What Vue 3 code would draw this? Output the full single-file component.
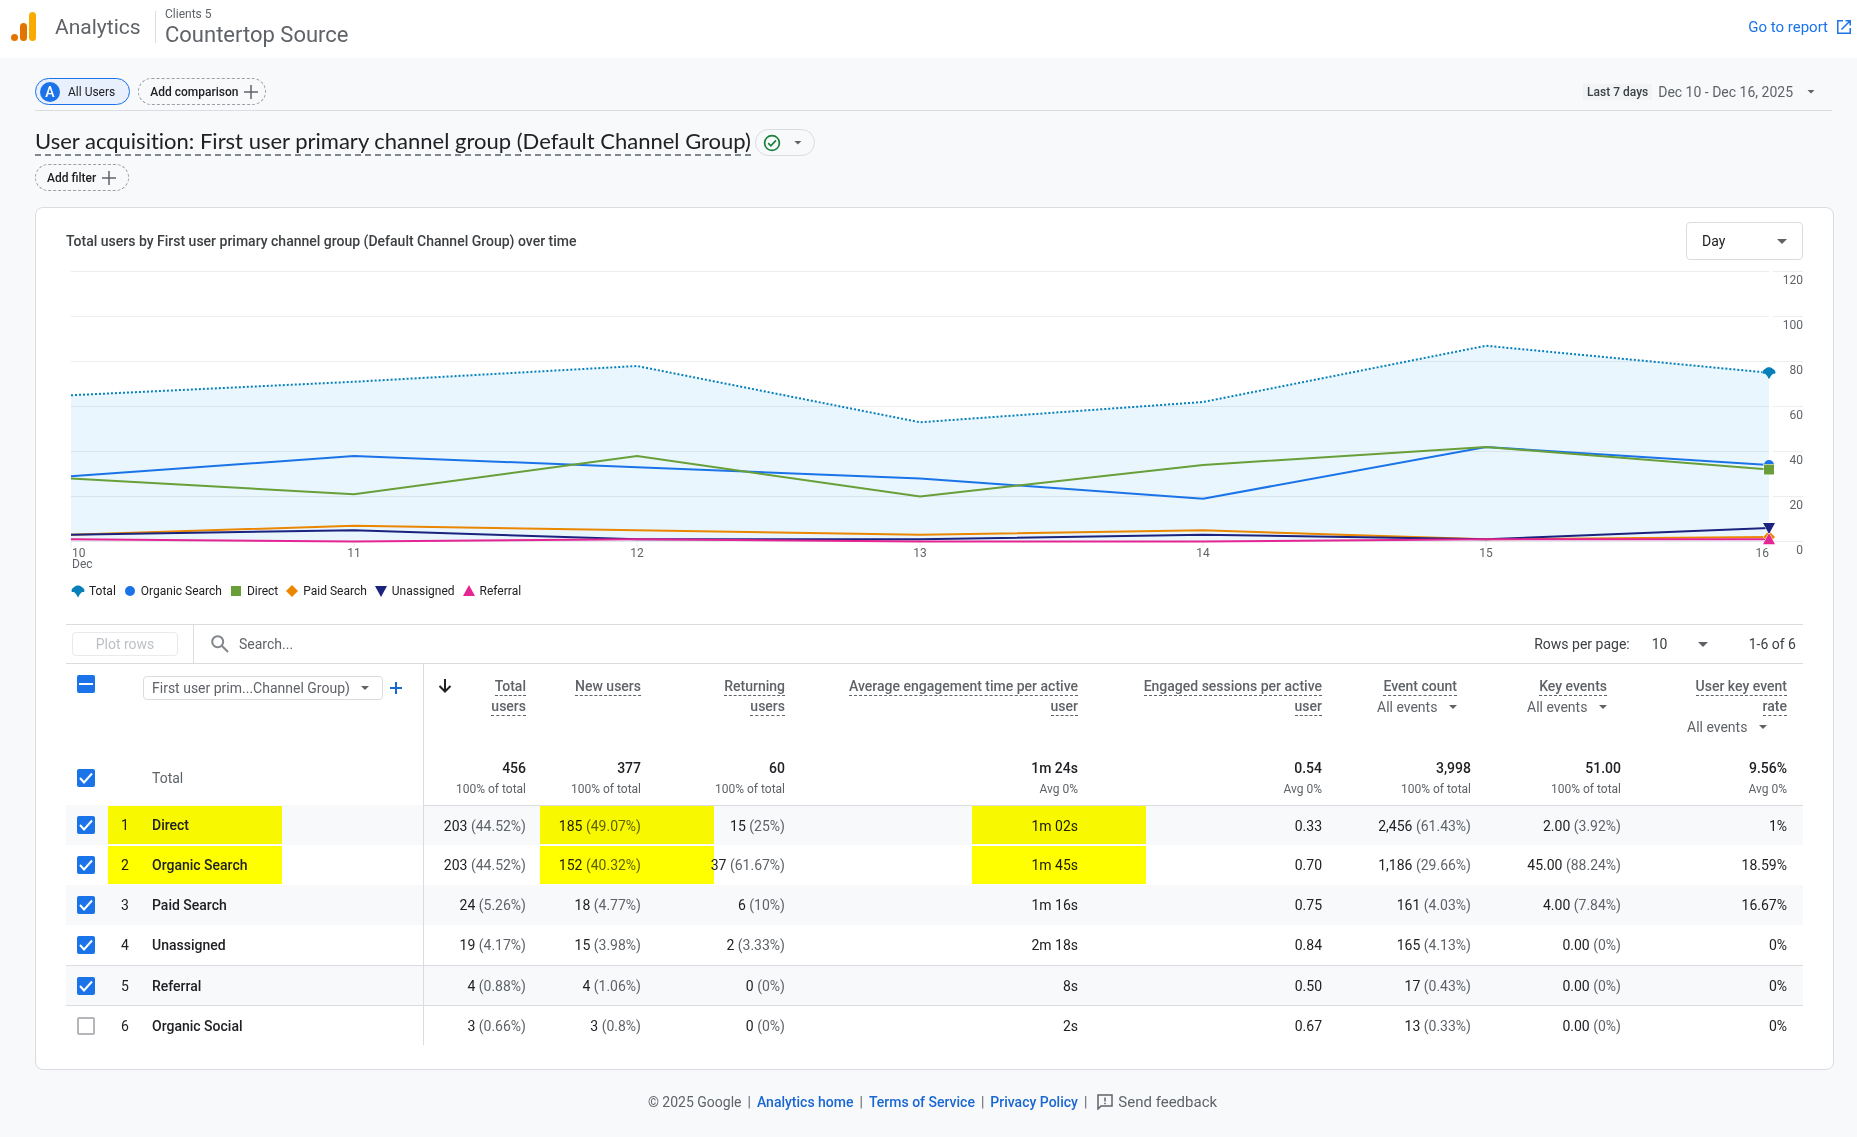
<script setup>
import { ref, computed, onMounted, onBeforeUnmount } from 'vue'

const days = ['10', '11', '12', '13', '14', '15', '16']
const series = [
  { name: 'Total', color: '#0580b8', values: [65, 71, 78, 53, 62, 87, 75], dotted: true, shape: 'M-6.5 0C-6.5 -2 -5 -3.5 -3.5 -4C-2.5 -6 2.5 -6 3.5 -4C5 -3.5 6.5 -2 6.5 0L6 1H4L2 3L0 6.5L-2 3L-4 1H-6Z' },
  { name: 'Organic Search', color: '#1a73e8', values: [29, 38, 33, 28, 19, 42, 34], shape: 'M-5 0A5 5 0 1 1 5 0A5 5 0 1 1 -5 0Z' },
  { name: 'Direct', color: '#689f38', values: [28, 21, 38, 20, 34, 42, 32], shape: 'M-5 -5H5V5H-5Z' },
  { name: 'Paid Search', color: '#ea8600', values: [3, 7, 5, 3, 5, 1, 2], shape: 'M0 -6L6 0L0 6L-6 0Z' },
  { name: 'Unassigned', color: '#1a237e', values: [3, 5, 1, 1, 3, 1, 6], shape: 'M-6 -5H6L0 6Z' },
  { name: 'Referral', color: '#e52592', values: [1, 0, 1, 0, 0, 1, 1], shape: 'M-6 5H6L0 -6Z' }
]

const chart = ref(null)
const chartWidth = ref(1737)
let observer
onMounted(() => {
  observer = new ResizeObserver(() => { chartWidth.value = chart.value.clientWidth })
  observer.observe(chart.value)
})
onBeforeUnmount(() => observer.disconnect())

const left = 5
const base = 279.5
const plotRight = computed(() => chartWidth.value - 34)
const x = (i) => left + ((plotRight.value - left) * i) / (days.length - 1)
const y = (v) => base - v * 2.25
const points = (s) => s.values.map((v, i) => `${x(i)},${y(v)}`).join(' ')
const area = computed(() => `${left},${base} ${points(series[0])} ${plotRight.value},${base}`)
const ticks = [0, 20, 40, 60, 80, 100, 120]

const columns = [
  { lines: ['Total', 'users'], total: '456', sub: '100% of total', sorted: true },
  { lines: ['New users'], total: '377', sub: '100% of total' },
  { lines: ['Returning', 'users'], total: '60', sub: '100% of total' },
  { lines: ['Average engagement time per active', 'user'], total: '1m 24s', sub: 'Avg 0%' },
  { lines: ['Engaged sessions per active', 'user'], total: '0.54', sub: 'Avg 0%' },
  { lines: ['Event count'], total: '3,998', sub: '100% of total', events: 'inset' },
  { lines: ['Key events'], total: '51.00', sub: '100% of total', events: 'inset' },
  { lines: ['User key event', 'rate'], total: '9.56%', sub: 'Avg 0%', events: 'flush' }
]
const markClass = { 1: 'mark-users', 3: 'mark-time' }

const rows = [
  { name: 'Direct', checked: true, marked: true, cells: [['203', '44.52%'], ['185', '49.07%'], ['15', '25%'], ['1m 02s'], ['0.33'], ['2,456', '61.43%'], ['2.00', '3.92%'], ['1%']] },
  { name: 'Organic Search', checked: true, marked: true, cells: [['203', '44.52%'], ['152', '40.32%'], ['37', '61.67%'], ['1m 45s'], ['0.70'], ['1,186', '29.66%'], ['45.00', '88.24%'], ['18.59%']] },
  { name: 'Paid Search', checked: true, cells: [['24', '5.26%'], ['18', '4.77%'], ['6', '10%'], ['1m 16s'], ['0.75'], ['161', '4.03%'], ['4.00', '7.84%'], ['16.67%']] },
  { name: 'Unassigned', checked: true, cells: [['19', '4.17%'], ['15', '3.98%'], ['2', '3.33%'], ['2m 18s'], ['0.84'], ['165', '4.13%'], ['0.00', '0%'], ['0%']] },
  { name: 'Referral', checked: true, ruled: true, cells: [['4', '0.88%'], ['4', '1.06%'], ['0', '0%'], ['8s'], ['0.50'], ['17', '0.43%'], ['0.00', '0%'], ['0%']] },
  { name: 'Organic Social', checked: false, ruled: true, cells: [['3', '0.66%'], ['3', '0.8%'], ['0', '0%'], ['2s'], ['0.67'], ['13', '0.33%'], ['0.00', '0%'], ['0%']] }
]
</script>

<template>
  <div class="page">
    <header class="topbar">
      <svg class="logo" width="26" height="30" viewBox="0 0 26 30" aria-hidden="true">
        <rect x="18" y="0" width="7" height="29" rx="3.5" fill="#f9ab00" />
        <rect x="9" y="11" width="7" height="18" rx="3.5" fill="#e37400" />
        <circle cx="3.5" cy="25.5" r="3.5" fill="#e37400" />
      </svg>
      <span class="product">Analytics</span>
      <div class="property">
        <span class="account">Clients 5</span>
        <span class="property-name">Countertop Source</span>
      </div>
      <a class="report-link" href="#report">
        Go to report
        <svg width="14" height="14" viewBox="0 0 14 14" fill="none" stroke="currentColor" stroke-width="1.5" aria-hidden="true">
          <path d="M6 .8H.8V13.2H13.2V8M8.5 .8H13.2V5.5M13.2 .8L4.5 9.5" />
        </svg>
      </a>
    </header>

    <main>
      <div class="comparisons">
        <button class="chip chip-active"><span class="badge">A</span>All Users</button>
        <button class="chip chip-dashed">Add comparison
          <svg width="14" height="14" viewBox="0 0 14 14" stroke="#5f6368" stroke-width="1.5" aria-hidden="true"><path d="M7 0V14M0 7H14" /></svg>
        </button>
        <button class="date-range"><span class="preset">Last 7 days</span>Dec 10 - Dec 16, 2025<span class="caret"></span></button>
      </div>

      <div class="title-row">
        <h1>User acquisition: First user primary channel group (Default Channel Group)</h1>
        <button class="status" aria-label="Data quality">
          <svg width="18" height="18" viewBox="0 0 18 18" fill="none" stroke="#188038" stroke-width="1.7" aria-hidden="true">
            <circle cx="9" cy="9" r="7.4" /><path d="M5.2 9.2L7.8 11.8L13 6.4" />
          </svg>
          <span class="caret"></span>
        </button>
      </div>
      <button class="chip chip-dashed chip-filter">Add filter
        <svg width="14" height="14" viewBox="0 0 14 14" stroke="#5f6368" stroke-width="1.5" aria-hidden="true"><path d="M7 0V14M0 7H14" /></svg>
      </button>

      <section class="card">
        <div class="card-head">
          <h2>Total users by First user primary channel group (Default Channel Group) over time</h2>
          <select class="interval" aria-label="Interval"><option>Day</option></select>
        </div>

        <div ref="chart" class="chart">
          <svg :width="chartWidth" height="310">
            <polygon :points="area" fill="#e9f6fe" />
            <g v-for="t in ticks" :key="t">
              <path :d="`M${left} ${y(t)}H${plotRight}M${plotRight + 4} ${y(t)}H${chartWidth}`" class="gridline" />
              <text :x="chartWidth" :y="y(t) + 12" text-anchor="end" class="axis">{{ t }}</text>
            </g>
            <g v-for="(d, i) in days" :key="d">
              <path :d="`M${x(i)} ${base}v6`" class="gridline" />
              <text :x="i === 0 ? left + 1 : x(i)" :y="base + 15" :text-anchor="i === 0 ? 'start' : i === 6 ? 'end' : 'middle'" class="axis">{{ d }}</text>
            </g>
            <text :x="left + 1" :y="base + 26" class="axis">Dec</text>
            <polyline v-for="s in series" :key="s.name" :points="points(s)" fill="none" :stroke="s.color" stroke-width="2" :stroke-dasharray="s.dotted ? '2 2' : null" />
            <path v-for="s in series" :key="s.name" :d="s.shape" :fill="s.color" stroke="#fff" stroke-width="1" paint-order="stroke" :transform="`translate(${plotRight} ${y(s.values[6])})`" />
          </svg>
        </div>

        <ul class="legend">
          <li v-for="s in series" :key="s.name">
            <svg width="12" height="12" viewBox="-6 -6 12 12" aria-hidden="true"><path :d="s.shape" :fill="s.color" /></svg>{{ s.name }}
          </li>
        </ul>

        <div class="toolbar">
          <div class="plot"><button disabled>Plot rows</button></div>
          <label class="search">
            <svg width="18" height="18" viewBox="0 0 18 18" fill="none" stroke="#80868b" stroke-width="2" aria-hidden="true"><circle cx="6.7" cy="6.7" r="5.5" /><path d="M10.8 10.8L17 17" /></svg>
            <input type="text" placeholder="Search..." aria-label="Search">
          </label>
          <label class="per-page">Rows per page:
            <select><option>10</option></select>
          </label>
          <span class="range">1-6 of 6</span>
        </div>

        <table>
          <colgroup>
            <col class="c-check"><col class="c-index"><col class="c-name">
            <col class="c-total"><col class="c-new"><col class="c-returning"><col class="c-time"><col class="c-sessions"><col class="c-count"><col class="c-key"><col class="c-rate">
          </colgroup>
          <thead>
            <tr class="head">
              <th class="check"><input type="checkbox" class="partial" aria-label="All rows"></th>
              <th></th>
              <th class="name">
                <div class="dimension">
                  <button class="dimension-pick">First user prim...Channel Group)<span class="caret"></span></button>
                  <button class="add" aria-label="Add dimension"><svg width="12" height="12" viewBox="0 0 12 12" stroke="#1967d2" stroke-width="2" aria-hidden="true"><path d="M6 0V12M0 6H12" /></svg></button>
                </div>
              </th>
              <th v-for="c in columns" :key="c.lines[0]" class="metric" :class="{ inset: c.events === 'inset' }">
                <div class="metric-head">
                  <svg v-if="c.sorted" class="sort" width="14" height="14" viewBox="0 0 14 14" fill="none" stroke="#202124" stroke-width="2" aria-label="Descending"><path d="M7 0V12.5M1.5 7L7 12.5L12.5 7" /></svg>
                  <span class="metric-name"><span class="term"><template v-for="(l, i) in c.lines" :key="l"><br v-if="i">{{ l }}</template></span></span>
                </div>
                <select v-if="c.events" class="events" :class="c.events" aria-label="Events"><option>All events</option></select>
              </th>
            </tr>
            <tr class="totals">
              <td class="check"><input type="checkbox" checked aria-label="Total"></td>
              <td></td>
              <td class="name">Total</td>
              <td v-for="c in columns" :key="c.lines[0]" class="metric"><b>{{ c.total }}</b><small>{{ c.sub }}</small></td>
            </tr>
          </thead>
          <tbody>
            <tr v-for="(r, n) in rows" :key="r.name" :class="{ ruled: r.ruled }">
              <td class="check"><input type="checkbox" :checked="r.checked" :aria-label="r.name"></td>
              <td class="index">{{ n + 1 }}<span v-if="r.marked" class="mark mark-name"></span></td>
              <td class="name">{{ r.name }}</td>
              <td v-for="(c, i) in r.cells" :key="i" class="metric">{{ c[0] }}<span v-if="c[1]" class="share"> ({{ c[1] }})</span><span v-if="r.marked && markClass[i]" class="mark" :class="markClass[i]"></span></td>
            </tr>
          </tbody>
        </table>
      </section>
    </main>

    <footer>
      <span>© 2025 Google</span><span>|</span>
      <a href="#home">Analytics home</a><span>|</span>
      <a href="#terms">Terms of Service</a><span>|</span>
      <a href="#privacy">Privacy Policy</a><span>|</span>
      <button class="feedback">
        <svg width="16" height="16" viewBox="0 0 16 16" fill="none" stroke="#5f6368" stroke-width="1.5" aria-hidden="true"><path d="M1 15V1H15V12H4Z" /><path d="M8 3.5V7.5M8 8.8V10.3" /></svg>Send feedback
      </button>
    </footer>
  </div>
</template>

<style>
body {
  background: #f8f9fb;
}
</style>

<style scoped>
.page,
.page * {
  box-sizing: border-box;
}
.page {
  font-family: Roboto, "Liberation Sans", sans-serif;
  font-size: 14px;
  line-height: 20px;
  color: #202124;
}
button,
input,
select {
  font: inherit;
  color: inherit;
  margin: 0;
  padding: 0;
  border: 0;
  background: none;
}
select {
  appearance: none;
}
a {
  color: #1967d2;
  text-decoration: none;
}
h1,
h2 {
  margin: 0;
  font-weight: 400;
}
.caret {
  width: 8px;
  height: 4px;
  background: #5f6368;
  clip-path: polygon(0 0, 100% 0, 50% 100%);
}

.topbar {
  display: flex;
  align-items: center;
  height: 58px;
  padding: 0 6px 4px 11px;
  background: #fff;
  color: #5f6368;
}
.product {
  margin-left: 18px;
  width: 100px;
  font-size: 21px;
}
.property {
  display: flex;
  flex-direction: column;
  justify-content: center;
  height: 32px;
  padding-left: 9px;
  border-left: 1px solid #dadce0;
}
.account {
  font-size: 12px;
  line-height: 16px;
}
.property-name {
  font-size: 22px;
  line-height: 26px;
}
.report-link {
  display: flex;
  align-items: center;
  gap: 9px;
  margin-left: auto;
  color: #1a73e8;
  font-size: 15px;
}

main {
  padding: 20px 23px 0 35px;
}
.comparisons {
  display: flex;
  align-items: center;
  gap: 8px;
  height: 33px;
  margin-right: 2px;
  padding-bottom: 5px;
  border-bottom: 1px solid #dadce0;
}
.chip {
  display: flex;
  align-items: center;
  gap: 6px;
  height: 27px;
  padding: 0 7px 0 11px;
  border-radius: 14px;
  font-size: 12px;
  font-weight: 500;
}
.chip-dashed {
  border: 1px dashed #9aa0a6;
}
.chip-filter {
  padding-right: 12px;
}
.chip-active {
  gap: 8px;
  padding: 0 14px 0 4px;
  border: 1px solid #1a73e8;
  background: #e8f0fe;
  font-weight: 400;
}
.badge {
  width: 20px;
  border-radius: 50%;
  background: #1a73e8;
  color: #fff;
  font-size: 14px;
  font-weight: 500;
}
.date-range {
  display: flex;
  align-items: center;
  gap: 6px;
  margin-left: auto;
  padding-right: 17px;
  color: #5f6368;
}
.preset {
  padding: 0 4px;
  background: #f1f3f4;
  color: #3c4043;
  font-size: 12px;
  font-weight: 500;
  line-height: 16px;
}
.date-range .caret {
  margin-left: 8px;
}
.title-row {
  display: flex;
  align-items: center;
  gap: 4px;
  height: 27px;
  margin: 18px 0 8px;
}
h1 {
  padding-bottom: 2px;
  border-bottom: 2px dashed #80868b;
  font-family: Lato, Roboto, sans-serif;
  font-size: 22px;
  font-variant-ligatures: none;
  line-height: 23px;
}
.status {
  display: flex;
  align-items: center;
  gap: 13px;
  height: 27px;
  padding: 0 12px 0 7px;
  border: 1px solid #dadce0;
  border-radius: 14px;
}

.card {
  margin-top: 16px;
  padding: 14px 30px 24px;
  border: 1px solid #dadce0;
  border-radius: 8px;
  background: #fff;
}
.card-head {
  display: flex;
  align-items: center;
  justify-content: space-between;
}
h2 {
  color: #3c4043;
  font-size: 14px;
  font-weight: 500;
}
select {
  background: url("data:image/svg+xml,%3Csvg xmlns='http://www.w3.org/2000/svg' width='10' height='5'%3E%3Cpath d='M0 0H10L5 5Z' fill='%235f6368'/%3E%3C/svg%3E") no-repeat right 0 center;
}
.interval {
  width: 117px;
  height: 38px;
  padding-left: 15px;
  border: 1px solid #dadce0;
  border-radius: 4px;
  background-position: right 15px center;
}
.chart {
  margin-top: 2px;
  height: 310px;
}
.chart svg {
  display: block;
}
.gridline {
  stroke: #000;
  stroke-opacity: 0.07;
  fill: none;
}
.axis {
  fill: #5f6368;
  font-size: 12px;
}
.legend {
  display: flex;
  gap: 8px;
  margin: 11px 0 25px;
  padding: 0 0 0 6px;
  list-style: none;
  font-size: 12px;
  line-height: 16px;
}
.legend li {
  display: flex;
  align-items: center;
  gap: 5px;
}
.legend svg {
  overflow: visible;
}

.toolbar {
  display: flex;
  align-items: center;
  height: 40px;
  border: 1px solid #dadce0;
  border-width: 1px 0;
  color: #3c4043;
}
.plot {
  display: flex;
  align-items: center;
  align-self: stretch;
  width: 128px;
  padding-left: 6px;
  border-right: 1px solid #dadce0;
}
.plot button {
  width: 106px;
  height: 24px;
  border: 1px solid #e8eaed;
  border-radius: 4px;
  color: #bdc1c6;
}
.search {
  display: flex;
  flex: 1;
  align-items: center;
  gap: 10px;
  padding-left: 17px;
}
.search input {
  flex: 1;
  outline: 0;
}
.search input::placeholder {
  color: #5f6368;
}
.per-page {
  display: flex;
  gap: 22px;
}
.per-page select {
  width: 56px;
}
.range {
  margin: 0 7px 0 41px;
}

table {
  width: 100%;
  table-layout: fixed;
  border-collapse: separate;
  border-spacing: 0;
}
.c-check { width: 42px; }
.c-index { width: 34px; }
.c-name { width: 282px; }
.c-total { width: 118px; }
.c-new { width: 115px; }
.c-returning { width: 144px; }
.c-time { width: 293px; }
.c-sessions { width: 244px; }
.c-count { width: 149px; }
.c-key { width: 150px; }
.c-rate { width: 166px; }
th,
td {
  position: relative;
  height: 40px;
  padding: 0;
  text-align: left;
  white-space: nowrap;
}
.head th {
  height: 86px;
  padding-top: 12px;
  vertical-align: top;
  font-weight: 500;
  color: #5f6368;
}
.totals td {
  height: 55px;
}
.totals .name {
  color: #5f6368;
  font-weight: 400;
}
.totals .metric {
  padding-top: 2px;
}
th.check,
td.check {
  padding-left: 11px;
}
.head th.check {
  padding-top: 11px;
}
input[type="checkbox"] {
  appearance: none;
  display: block;
  width: 18px;
  height: 18px;
  border: 2px solid #b4b6b9;
  border-radius: 2px;
  background: #fff center no-repeat;
}
input[type="checkbox"]:checked,
input.partial {
  border: 0;
  background-color: #1a73e8;
}
input[type="checkbox"]:checked {
  background-image: url("data:image/svg+xml,%3Csvg xmlns='http://www.w3.org/2000/svg' width='18' height='18'%3E%3Cpath d='M3 9L7 13.5L15 4.5' fill='none' stroke='white' stroke-width='2'/%3E%3C/svg%3E");
}
input.partial {
  background-image: linear-gradient(#fff, #fff);
  background-size: 14px 2px;
}
td.index {
  padding-left: 13px;
}
.name {
  padding-left: 10px;
  border-right: 1px solid #dadce0;
  font-weight: 500;
}
.head th.name {
  padding-left: 1px;
}
.dimension {
  display: flex;
  align-items: center;
  gap: 7px;
  font-weight: 400;
}
.dimension-pick {
  display: flex;
  align-items: center;
  justify-content: space-between;
  width: 240px;
  height: 24px;
  padding: 0 13px 0 8px;
  border: 1px solid #dadce0;
  border-radius: 4px;
}
.add {
  display: flex;
}
th.metric,
td.metric {
  padding-right: 16px;
  text-align: right;
}
.head th.inset {
  padding-right: 30px;
}
.metric-head {
  display: flex;
  justify-content: space-between;
}
.metric-name {
  margin-left: auto;
}
.sort {
  margin: 3px 0 0 14px;
}
.term {
  padding-bottom: 1px;
  border-bottom: 1px dashed #5f6368;
}
.events {
  width: 80px;
  margin-top: 1px;
  background-size: 8px 4px;
  font-weight: 400;
}
.events.flush {
  margin-right: 20px;
}
.totals b {
  display: block;
  font-weight: 500;
}
.totals small {
  display: block;
  color: #5f6368;
  font-size: 12px;
  line-height: 22px;
}
tbody tr:nth-child(odd) {
  background: #f8f9fb;
}
tbody tr:first-child .metric,
.ruled td {
  border-top: 1px solid #dadce0;
}
.share {
  color: #5f6368;
}
.mark {
  position: absolute;
  top: 1px;
  bottom: 1px;
  width: 174px;
  background: #ff0;
  mix-blend-mode: multiply;
}
tbody tr:first-child .metric .mark {
  top: 0;
}
.mark-name {
  left: 0;
}
.mark-users {
  right: -57px;
}
.mark-time {
  right: -52px;
}

footer {
  display: flex;
  justify-content: center;
  gap: 6px;
  padding: 22px 0 24px 8px;
  color: #5f6368;
}
footer a {
  font-weight: 500;
}
.feedback {
  display: flex;
  align-items: center;
  gap: 5px;
  margin-left: 4px;
  font-size: 15px;
}
</style>
